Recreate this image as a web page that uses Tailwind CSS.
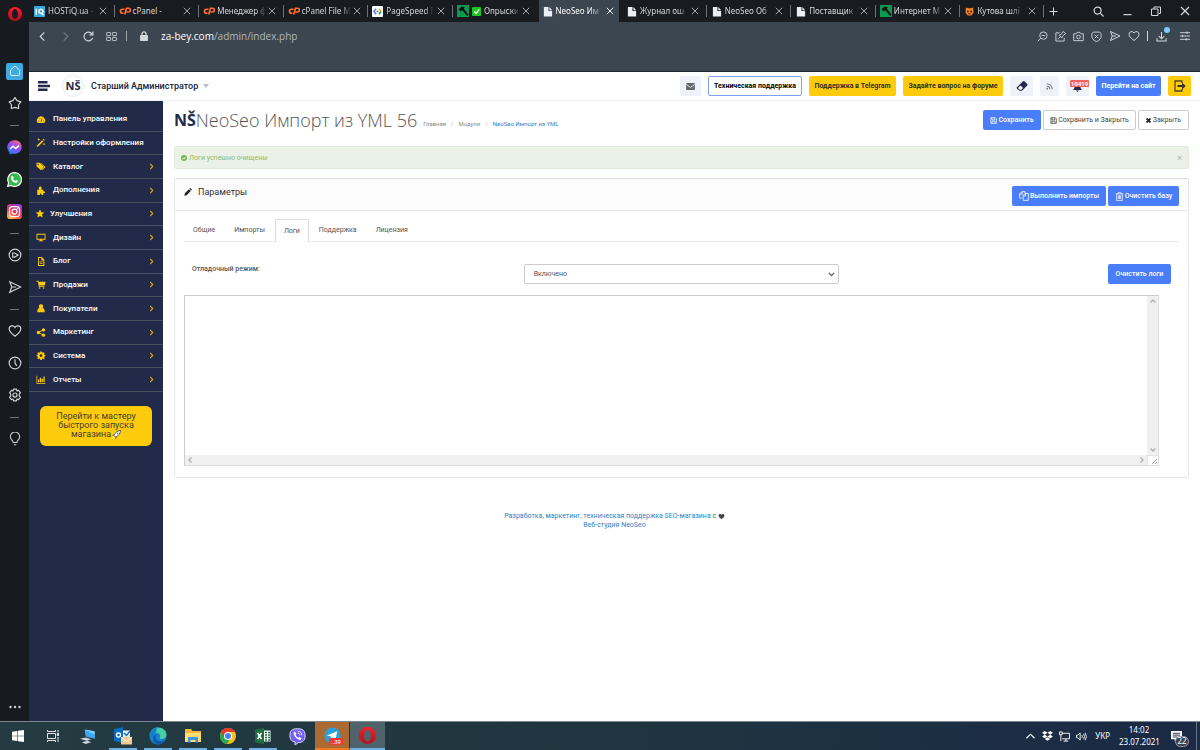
<!DOCTYPE html>
<html lang="ru">
<head>
<meta charset="utf-8">
<title>NeoSeo Импорт из YML</title>
<script src="https://cdn.jsdelivr.net/npm/@tailwindcss/browser@4"></script>
</head>
<body class="flex min-h-screen flex-col bg-white font-['Roboto',sans-serif] text-[7px] leading-[10px] text-[#666]">
<svg class="h-0 w-0" aria-hidden="true">
  <defs><linearGradient id="og" x1="0" y1="0" x2="0" y2="1"><stop offset="0" stop-color="#ff1b2d"/><stop offset="1" stop-color="#b0101c"/></linearGradient></defs>
  <symbol id="x" viewBox="0 0 10 10"><path d="M1 1l8 8M9 1l-8 8" stroke="currentColor" fill="none" stroke-width="1.2"/></symbol>
  <symbol id="cp" viewBox="0 0 24 16"><g fill="none" stroke="#ff6c2c" stroke-width="3.4"><path d="M11 4.500H7a4 4 0 0 0 0 8h2"/><path d="M11.500 15L15 2.500h4a3.400 3.400 0 0 1 0 7.500h-4"/></g></symbol>
  <symbol id="doc" viewBox="0 0 10 12"><path d="M0.500 1h5v4.500h4V11.500h-9z M6.500 1L9.500 4.500h-3z" fill="#eceff1"/></symbol>
  <symbol id="hammer" viewBox="0 0 12 12"><path d="M0 0h12v12H0z" fill="#0c9a50"/><path d="M1.500 4.500l3-3 3.500.8-1.200 1.500 4.700 6-1.300 1.300L5.300 5.300 3.800 6.500z" fill="#111"/></symbol>
  <symbol id="chev" viewBox="0 0 6 8"><path d="M1.500 1l3 3-3 3" fill="none" stroke="#d9a514" stroke-width="1.300"/></symbol>
  <symbol id="heart" viewBox="0 0 24 24"><path d="M12 21C5 15.500 2 12.500 2 8.500A5.300 5.300 0 0 1 12 6a5.300 5.300 0 0 1 10 2.500c0 4-3 7-10 12.500z"/></symbol>
  <symbol id="floppy" viewBox="0 0 16 16"><path d="M2 1.500h10l2.500 2.500v10.500H2zM4.500 2v4.500h6.500V2M4.500 14V9.500h7V14" fill="none" stroke="currentColor" stroke-width="1.700"/></symbol>
  <symbol id="opera" viewBox="0 0 24 24"><path fill="url(#og)" fill-rule="evenodd" d="M12 0a12 12 0 1 0 0 24a12 12 0 1 0 0-24zM12 3.500c3 0 5 3.800 5 8.500s-2 8.500-5 8.500-5-3.800-5-8.500 2-8.500 5-8.500z"/></symbol>
  <symbol id="send" viewBox="0 0 24 24"><path d="M3 3l19 9-19 9 3.500-9zM6.500 12H14"/></symbol>
</svg>

<div class="flex flex-1">
  <!-- Browser side panel -->
  <aside class="flex w-[29px] shrink-0 flex-col items-center bg-[#171b1f] text-[#cfd3d6]">
    <div class="flex h-[55px] items-start pt-[7px]"><svg class="size-[14px]"><use href="#opera"/></svg></div>
    <button aria-label="Главная" class="flex h-8 items-center"><span class="flex size-[17px] items-center justify-center rounded-xs bg-[#3fa9e1]"><svg class="size-3" viewBox="0 0 24 24" fill="none" stroke="#dff2fc" stroke-width="2"><path d="M3 10l9-8 9 8v9a2 2 0 0 1-2 2H5a2 2 0 0 1-2-2z"/></svg></span></button>
    <button aria-label="Закладки" class="flex h-8 items-center"><svg class="size-[14px]" viewBox="0 0 24 24" fill="none" stroke="currentColor" stroke-width="2" stroke-linejoin="round"><path d="M12 2.500l3.500 5.500 6.500 2-4 5 .3 6.500L12 19.500l-6.300 2L6 15l-4-5 6.500-2z"/></svg></button>
    <div class="flex h-3 items-center"><span class="h-px w-[9px] bg-[#6d7275]"></span></div>
    <button aria-label="Messenger" class="flex h-8 items-center"><svg class="size-[15px]" viewBox="0 0 24 24"><defs><linearGradient id="ms" x1="0.200" y1="1" x2="0.800" y2="0"><stop offset="0" stop-color="#1b8cff"/><stop offset=".5" stop-color="#8a4bff"/><stop offset="1" stop-color="#ff6a70"/></linearGradient></defs><path fill="url(#ms)" d="M12 .5C5.500.5.5 5.200.5 11.500c0 3.300 1.400 6 3.500 8V23.500l3.700-2c1.300.4 2.800.6 4.300.6 6.500 0 11.500-4.700 11.500-11S18.500.5 12 .5z"/><path fill="none" stroke="#fff" stroke-width="2.400" d="M5 14.500l4.500-4.500 4.500 3.500 5-4.500"/></svg></button>
    <button aria-label="WhatsApp" class="flex h-8 items-center"><svg class="size-[15px]" viewBox="0 0 24 24"><path d="M1 23l1.600-5.700A11 11 0 1 1 6.700 21.500z" fill="#35b84b" stroke="#f4f4f4" stroke-width="2"/><path fill="#fff" d="M8 6.500l1.700.2 1 2.800-1 1.300c.8 1.600 2 2.700 3.700 3.500l1.400-1.500 2.700 1.300c.2 2-1.500 3.400-3.300 3.300-4-.5-7.500-4-8-7.500 0-1.400.8-2.800 1.800-3.400z"/></svg></button>
    <button aria-label="Instagram" class="flex h-8 items-center"><svg class="size-[15px]" viewBox="0 0 24 24"><defs><linearGradient id="ig" x1="0.200" y1="1" x2="0.700" y2="0"><stop offset="0" stop-color="#ffc04a"/><stop offset=".45" stop-color="#f5324b"/><stop offset="1" stop-color="#8a3bd0"/></linearGradient></defs><rect width="24" height="24" rx="5" fill="url(#ig)"/><g fill="none" stroke="#fff" stroke-width="2"><rect x="4" y="4" width="16" height="16" rx="4.500"/><circle cx="12" cy="12" r="4"/></g><circle cx="16.800" cy="7.200" r="1.200" fill="#fff"/></svg></button>
    <div class="flex h-3 items-center"><span class="h-px w-[9px] bg-[#6d7275]"></span></div>
    <button aria-label="Плеер" class="flex h-8 items-center"><svg class="size-[14px]" viewBox="0 0 24 24" fill="none" stroke="currentColor" stroke-width="2"><circle cx="12" cy="12" r="10"/><path d="M8 8.500h3.500l6 3.500-6 3.500H8z"/></svg></button>
    <button aria-label="Поток" class="flex h-8 items-center"><svg class="size-[14px] fill-none stroke-current stroke-2"><use href="#send"/></svg></button>
    <div class="flex h-3 items-center"><span class="h-px w-[9px] bg-[#6d7275]"></span></div>
    <button aria-label="Избранное" class="flex h-8 items-center"><svg class="size-[14px] fill-none stroke-current stroke-2"><use href="#heart"/></svg></button>
    <button aria-label="История" class="flex h-8 items-center"><svg class="size-[14px]" viewBox="0 0 24 24" fill="none" stroke="currentColor" stroke-width="2"><circle cx="12" cy="12" r="10"/><path d="M12 5.500V12l3 5"/></svg></button>
    <button aria-label="Настройки" class="flex h-8 items-center"><svg class="size-[14px]" viewBox="0 0 24 24" fill="none" stroke="currentColor" stroke-width="2" stroke-linejoin="round"><path d="M9.500 2h5l.8 3 2.700-1 3.300 4-2 2.500v3l2 2.500-3.300 4-2.700-1-.8 3h-5l-.8-3-2.700 1-3.300-4 2-2.500v-3l-2-2.500L6 4l2.700 1z"/><circle cx="12" cy="12" r="3.500"/></svg></button>
    <div class="flex h-3 items-center"><span class="h-px w-[9px] bg-[#6d7275]"></span></div>
    <button aria-label="Советы" class="flex h-8 items-center"><svg class="size-[14px]" viewBox="0 0 24 24" fill="none" stroke="currentColor" stroke-width="1.800"><path d="M9 18c0-3-5-5-5-10a8 8 0 0 1 16 0c0 5-5 7-5 10zM10 22h4"/></svg></button>
    <button aria-label="Ещё" class="mt-auto flex h-7 items-center"><svg class="h-1 w-3" viewBox="0 0 12 4" fill="currentColor"><circle cx="1.500" cy="2" r="1.200"/><circle cx="6" cy="2" r="1.200"/><circle cx="10.500" cy="2" r="1.200"/></svg></button>
  </aside>

  <div class="flex min-w-0 flex-1 flex-col">
    <!-- Tabs -->
    <div class="flex h-[22px] bg-[#181b1f] font-['Noto_Sans',sans-serif] text-[8px] leading-3 text-[#d6d8da]">
      <div class="grid min-w-0 flex-1 grid-cols-12 items-center whitespace-nowrap">
        <div class="flex items-center gap-[3px] pl-[5px] pr-[7px]"><svg class="size-[11px] shrink-0" viewBox="0 0 12 12"><rect width="12" height="12" rx="1" fill="#35a9e0"/><path d="M2.500 3v6.500M7.500 3.500a2.300 2.300 0 1 0 .1 0M8.500 8l2 2" stroke="#fff" stroke-width="1.600" fill="none"/></svg><span class="flex-1 mask-r-from-80%">HOSTiQ.ua -</span><svg class="size-2 shrink-0 text-[#a8acaf]"><use href="#x"/></svg></div>
        <div class="flex items-center gap-[2px] border-l border-[#6d7276] pl-[4px] pr-[7px]"><svg class="h-2 w-3 shrink-0"><use href="#cp"/></svg><span class="flex-1">cPanel -</span><svg class="size-2 shrink-0 text-[#a8acaf]"><use href="#x"/></svg></div>
        <div class="flex items-center gap-[2px] border-l border-[#6d7276] pl-[4px] pr-[7px]"><svg class="h-2 w-3 shrink-0"><use href="#cp"/></svg><span class="flex-1 mask-r-from-80%">Менеджер ф</span><svg class="size-2 shrink-0 text-[#a8acaf]"><use href="#x"/></svg></div>
        <div class="flex items-center gap-[2px] border-l border-[#6d7276] pl-[4px] pr-[7px]"><svg class="h-2 w-3 shrink-0"><use href="#cp"/></svg><span class="flex-1 mask-r-from-80%">cPanel File M</span><svg class="size-2 shrink-0 text-[#a8acaf]"><use href="#x"/></svg></div>
        <div class="flex items-center gap-[3px] border-l border-[#6d7276] pl-[4px] pr-[7px]"><svg class="size-[11px] shrink-0" viewBox="0 0 12 12"><rect width="12" height="12" rx="1" fill="#fff"/><path d="M4.500 3L2 6l2.500 3" stroke="#4285f4" stroke-width="1.600" fill="none"/><path d="M7.500 3L10 6" stroke="#f4b400" stroke-width="1.600"/><path d="M10 6L7.500 9" stroke="#0f9d58" stroke-width="1.600"/><circle cx="6" cy="6" r="1" fill="#db4437"/></svg><span class="flex-1 mask-r-from-80%">PageSpeed I</span><svg class="size-2 shrink-0 text-[#a8acaf]"><use href="#x"/></svg></div>
        <div class="flex items-center gap-[3px] border-l border-[#6d7276] pl-[4px] pr-[7px]"><svg class="size-[12px] shrink-0"><use href="#hammer"/></svg><svg class="size-[9px] shrink-0" viewBox="0 0 10 10"><rect width="10" height="10" rx="1" fill="#18c61c"/><path d="M2.500 5l2 2.200 3.500-4.500" stroke="#fff" stroke-width="1.500" fill="none"/></svg><span class="flex-1 mask-r-from-80%">Опрыски</span><svg class="size-2 shrink-0 text-[#a8acaf]"><use href="#x"/></svg></div>
        <div class="mx-[2px] flex h-[22px] items-center gap-[3px] self-end bg-[#3b4651] pl-[4px] pr-[5px] text-white"><svg class="h-[11px] w-[10px] shrink-0"><use href="#doc"/></svg><span class="flex-1 mask-r-from-70%">NeoSeo Им</span><svg class="size-2 shrink-0"><use href="#x"/></svg></div>
        <div class="flex items-center gap-[3px] pl-[6px] pr-[7px]"><svg class="h-[11px] w-[10px] shrink-0"><use href="#doc"/></svg><span class="flex-1 mask-r-from-80%">Журнал ош</span><svg class="size-2 shrink-0 text-[#a8acaf]"><use href="#x"/></svg></div>
        <div class="flex items-center gap-[3px] border-l border-[#6d7276] pl-[5px] pr-[7px]"><svg class="h-[11px] w-[10px] shrink-0"><use href="#doc"/></svg><span class="flex-1 mask-r-from-80%">NeoSeo Об</span><svg class="size-2 shrink-0 text-[#a8acaf]"><use href="#x"/></svg></div>
        <div class="flex items-center gap-[3px] border-l border-[#6d7276] pl-[5px] pr-[7px]"><svg class="h-[11px] w-[10px] shrink-0"><use href="#doc"/></svg><span class="flex-1 mask-r-from-80%">Поставщик</span><svg class="size-2 shrink-0 text-[#a8acaf]"><use href="#x"/></svg></div>
        <div class="flex items-center gap-[2px] border-l border-[#6d7276] pl-[4px] pr-[7px]"><svg class="size-[12px] shrink-0"><use href="#hammer"/></svg><span class="flex-1 mask-r-from-80%">Интернет М</span><svg class="size-2 shrink-0 text-[#a8acaf]"><use href="#x"/></svg></div>
        <div class="flex items-center gap-[3px] border-x border-[#6d7276] pl-[5px] pr-[7px]"><svg class="size-[9px] shrink-0" viewBox="0 0 10 10"><path d="M1 .5l2.500 1h3L9 .5l.5 6L7 9.500H3L.5 6.500z" fill="#f58220"/><circle cx="3.200" cy="5" r="1" fill="#3c1f0c"/><circle cx="6.800" cy="5" r="1" fill="#3c1f0c"/><path d="M3.500 7.500h3" stroke="#3c1f0c"/></svg><span class="flex-1 mask-r-from-70%">Кутова шлі</span><svg class="size-2 shrink-0 text-[#a8acaf]"><use href="#x"/></svg></div>
      </div>
      <div class="flex w-[156px] items-center justify-between pl-[5px] pr-[10px] text-[#d6d8da]">
        <button aria-label="Новая вкладка"><svg class="size-[9px]" viewBox="0 0 10 10" stroke="currentColor" stroke-width="1.200"><path d="M5 0.500v9M0.500 5h9"/></svg></button>
        <div class="flex items-center gap-[19px]">
          <button aria-label="Поиск"><svg class="size-[11px]" viewBox="0 0 12 12" stroke="currentColor" fill="none" stroke-width="1.300"><circle cx="5" cy="5" r="3.800"/><path d="M8 8l3.500 3.500"/></svg></button>
          <button aria-label="Свернуть"><svg class="size-[9px]" viewBox="0 0 10 10"><path d="M.5 8.500h9" stroke="currentColor" stroke-width="1.300"/></svg></button>
          <button aria-label="Развернуть"><svg class="size-[10px]" viewBox="0 0 10 10" stroke="currentColor" fill="none"><path d="M3 3V1h6.500v6.500h-2M.5 3h6.500v6.500H.5z"/></svg></button>
          <button aria-label="Закрыть окно"><svg class="size-[10px]"><use href="#x"/></svg></button>
        </div>
      </div>
    </div>
    <!-- Address bar -->
    <div class="flex h-[50px] items-start justify-between border-b border-[#1f242a] bg-[#3b4651] px-[9px] pt-[8px] text-[#d3d7da]">
      <div class="flex h-3 items-center">
        <button aria-label="Назад"><svg class="size-[9px]" viewBox="0 0 10 10" fill="none" stroke="currentColor" stroke-width="1.300"><path d="M7 .5L2.500 5 7 9.500"/></svg></button>
        <button aria-label="Вперёд" class="ml-[14px] text-[#6f7982]"><svg class="size-[9px]" viewBox="0 0 10 10" fill="none" stroke="currentColor" stroke-width="1.300"><path d="M3 .5L7.500 5 3 9.500"/></svg></button>
        <button aria-label="Обновить" class="ml-[13px]"><svg class="size-[11px]" viewBox="0 0 12 12" fill="none" stroke="currentColor" stroke-width="1.300"><path d="M10.500 7.500A4.800 4.800 0 1 1 9.800 3.200M10.800 .5v3.700H7"/></svg></button>
        <button aria-label="Экспресс-панель" class="ml-3"><svg class="h-[9px] w-[11px]" viewBox="0 0 12 10" fill="none" stroke="currentColor"><rect x=".5" y=".5" width="4.500" height="3.500" rx=".8"/><rect x="7" y=".5" width="4.500" height="3.500" rx=".8"/><rect x=".5" y="6" width="4.500" height="3.500" rx=".8"/><rect x="7" y="6" width="4.500" height="3.500" rx=".8"/></svg></button>
        <span class="ml-[9px] h-[10px] w-px bg-[#9aa1a7]"></span>
        <svg class="ml-[13px] h-[10px] w-2" viewBox="0 0 8 10"><rect y="4" width="8" height="6" rx=".8" fill="currentColor"/><path d="M2 4V2.800a2 2 0 0 1 4 0V4" fill="none" stroke="currentColor" stroke-width="1.300"/></svg>
        <span class="ml-[13px] whitespace-nowrap font-['Open_Sans',sans-serif] text-[10px] leading-3 text-[#b0b7bd]"><span class="text-white">za-bey.com</span>/admin/index.php</span>
      </div>
      <div class="flex h-3 items-center gap-[7px] pr-px">
        <button aria-label="Масштаб"><svg class="size-[11px]" viewBox="0 0 12 12" fill="none" stroke="currentColor"><circle cx="7" cy="5" r="4"/><path d="M4 8L.8 11.200M5 5h4"/></svg></button>
        <button aria-label="Закрепить"><svg class="size-[11px]" viewBox="0 0 12 12" fill="none" stroke="currentColor"><path d="M5 2H1v9h9V7.500M3 9l3-3M4.500 4.500l3 3 .8-2L11.500 3 9 .5 6.500 3.700z"/></svg></button>
        <button aria-label="Снимок"><svg class="size-[11px]" viewBox="0 0 12 12" fill="none" stroke="currentColor"><path d="M.8 3h2.700l1-1.500h3l1 1.500h2.700v7.500H.8z"/><circle cx="6" cy="6.500" r="2"/></svg></button>
        <button aria-label="Блокировка рекламы"><svg class="size-[11px]" viewBox="0 0 12 12" fill="none" stroke="currentColor"><path d="M2.500 1.200h7L11 3v4L8.500 10.500 6 11.500 3.500 10.500 1 7V3zM4 4l4 4M8 4L4 8"/></svg></button>
        <button aria-label="Отправить"><svg class="size-[12px] fill-none stroke-current stroke-2"><use href="#send"/></svg></button>
        <button aria-label="В закладки"><svg class="size-[12px] fill-none stroke-current stroke-2"><use href="#heart"/></svg></button>
        <div class="h-[10px] w-px bg-[#d3d7da]"></div>
        <button aria-label="Загрузки" class="relative mr-[6px] ml-px"><svg class="size-[11px]" viewBox="0 0 12 12" fill="none" stroke="currentColor" stroke-width="1.100"><path d="M6 1v7M3 5.500l3 3 3-3M1 8v3h10V8"/></svg><span class="absolute -top-[4px] left-[8px] size-[6px] rounded-full bg-[#7fcdf7]"></span></button>
        <button aria-label="Простые настройки"><svg class="size-[10px]" viewBox="0 0 12 12" fill="none" stroke="currentColor" stroke-width="1.100"><path d="M0 2h12M0 6h12M0 10h12M8.500.5v3M3 4.500v3M7.500 8.500v3"/></svg></button>
      </div>
    </div>

    <!-- Admin header -->
    <header class="flex h-[29px] items-center justify-between border-b border-[#f0f0f0] bg-white px-[9px]">
      <div class="flex items-center">
        <button aria-label="Меню"><svg class="h-[10px] w-3" viewBox="0 0 12 10" stroke="#232a4b" stroke-width="2.600"><path d="M0 1.300h9.500M0 5h12M0 8.700h9.500"/></svg></button>
        <span class="ml-3 flex size-[22px] items-center justify-center rounded-full border border-[#e8eaf3] font-['Open_Sans',sans-serif] text-[11px] font-bold text-[#232a4b]">NŠ</span>
        <button class="ml-[7px] flex items-center gap-[5px] whitespace-nowrap text-[9px] font-medium text-[#151b3a]">Старший Администратор <svg class="h-1 w-[6px]" viewBox="0 0 6 4"><path d="M0 0h6L3 4z" fill="#b9bfce"/></svg></button>
      </div>
      <div class="flex items-center gap-[7px] whitespace-nowrap font-bold">
        <button aria-label="Почта" class="flex h-5 w-[21px] items-center justify-center rounded-xs bg-[#eff2f9]"><svg class="h-[7px] w-[9px]" viewBox="0 0 10 8"><rect width="10" height="8" rx="1" fill="#666"/><path d="M0 1.500l5 3.500 5-3.500" fill="none" stroke="#eff2f9"/></svg></button>
        <button class="h-5 w-[94px] rounded-xs border border-[#7ba0f8] text-black">Техническая поддержка</button>
        <button class="h-5 w-[87px] rounded-xs bg-[#fccb0c] text-[#30301c]">Поддержка в Telegram</button>
        <button class="h-5 w-[100px] rounded-xs bg-[#fccb0c] text-[#30301c]">Задайте вопрос на форуме</button>
        <button aria-label="Очистить кеш" class="flex h-5 w-[23px] items-center justify-center rounded-xs bg-[#eff2f9]"><svg class="size-3" viewBox="0 0 12 12"><path d="M.8 7.500L7 1.300a1 1 0 0 1 1.400 0l2.800 2.800a1 1 0 0 1 0 1.400L6 10.700H3.500L.8 8.500z" fill="#232a4b"/><path d="M2 8l2.500-2.500 2.500 2.500L5.200 9.800H3.800z" fill="#fff"/></svg></button>
        <button aria-label="RSS" class="flex h-5 w-[19px] items-center justify-center rounded-xs bg-[#eff2f9]"><svg class="size-[7px]" viewBox="0 0 10 10" fill="none" stroke="#777c8f" stroke-width="1.500"><path d="M1 1a8 8 0 0 1 8 8M1 4.500A4.500 4.500 0 0 1 5.500 9"/><circle cx="1.800" cy="8.200" r=".6"/></svg></button>
        <button aria-label="Уведомления" class="relative flex h-5 w-[23px] items-end justify-center rounded-xs bg-[#eff2f9] pb-[4px]"><svg class="h-[10px] w-[11px]" viewBox="0 0 10 10"><path d="M5 0a3 3 0 0 1 3 3v3l1.500 2h-9L2 6V3a3 3 0 0 1 3-3zM3.500 8.500h3L5 10z" fill="#232a4b"/></svg><span class="absolute top-1 left-1 h-[7px] rounded-[1px] bg-[#f4615f] px-px text-[6px] leading-[7px] text-white">10419</span></button>
        <button class="h-5 w-[65px] rounded-xs bg-[#497ef8] text-white">Перейти на сайт</button>
        <button aria-label="Выход" class="flex h-5 w-[23px] items-center justify-center rounded-xs bg-[#fccb0c]"><svg class="size-3" viewBox="0 0 12 12"><path d="M8 3V1H1v10h7V9" fill="none" stroke="#55481a" stroke-width="1.300"/><path d="M3.500 5H8V2.500L11.800 6 8 9.500V7H3.500z" fill="#3a3526"/></svg></button>
      </div>
    </header>

    <div class="flex flex-1">
      <!-- Admin menu -->
      <aside class="w-[134px] shrink-0 bg-[#222a49] pt-[7px] text-[8px] font-medium text-white">
        <nav class="grid h-[284px] auto-rows-fr grid-cols-1 whitespace-nowrap [&>a]:flex [&>a]:items-center [&>a]:border-b [&>a]:border-[#4b4f5c] [&>a]:pr-[9px] [&>a]:pl-[7px] [&>a>svg:first-child]:h-[9px] [&>a>svg:first-child]:w-[10px] [&>a>svg:first-child]:fill-[#fccb0c] [&>a>span]:ml-[7px] [&>a>span]:flex-1 [&>a>svg:last-child]:h-[7px] [&>a>svg:last-child]:w-[5px]">
          <a href="#"><svg viewBox="0 0 12 12"><path d="M1.500 10.500A5.500 5.500 0 1 1 10.500 10.500z"/><path d="M6 9l1.500-4M2.500 8h1M8.800 8h1M4 4l.5.800" stroke="#232a4b"/></svg><span>Панель управления</span></a>
          <a href="#"><svg viewBox="0 0 12 12"><path d="M0 10.500L7.500 3 9 4.500 1.500 12zM8.200 2.200L9.500 1 11 2.500 9.800 3.800zM3 0l.6 1.400L5 2l-1.400.6L3 4l-.6-1.400L1 2l1.400-.6zM10 6l.5 1.500 1.500.5-1.500.5L10 10l-.5-1.500L8 8l1.500-.5z"/></svg><span>Настройки оформления</span></a>
          <a href="#"><svg viewBox="0 0 12 12"><path d="M0 1h4.500L10 6.500 6 11 0 5.500zM6 1l6 5.500-4 4.500-.8-.8L10.500 6.500 5.500 1z"/><circle cx="2.200" cy="3.200" r=".9" fill="#232a4b"/></svg><span>Каталог</span><svg><use href="#chev"/></svg></a>
          <a href="#"><svg viewBox="0 0 12 12"><path d="M1 5h2.500C2.500 2 3.500.5 5 .5S7.500 2 6.500 5H9v2c3-1 3 3.500 0 2.500V12H6.500c.5-2.500-2.500-2.500-2 0H1z"/></svg><span>Дополнения</span><svg><use href="#chev"/></svg></a>
          <a href="#"><svg class="-ml-px mr-[-2px]" viewBox="0 0 12 12"><path d="M6 .5l1.700 3.700 4 .4-3 2.700.9 4L6 9.200l-3.600 2.100.9-4-3-2.700 4-.4z"/></svg><span>Улучшения</span><svg><use href="#chev"/></svg></a>
          <a href="#"><svg viewBox="0 0 12 12"><path fill-rule="evenodd" d="M0 1h12v8H7.500v1H9v1H3v-1h1.500V9H0zM1.200 2.200v5.600h9.600V2.200z"/></svg><span>Дизайн</span><svg><use href="#chev"/></svg></a>
          <a href="#"><svg viewBox="0 0 12 12"><path fill-rule="evenodd" d="M2 0h5l3.500 3.500V12H2zM3.200 1.200v9.600h6V4.500H6.500V1.200zM4.200 6h4v1h-4zM4.200 8h4v1h-4z"/></svg><span>Блог</span><svg><use href="#chev"/></svg></a>
          <a href="#"><svg viewBox="0 0 12 12"><path d="M0 1h2.500l.4 1.300H12l-1 5H4l.2.900h6.300v1H3.200L1.800 2.200H0z"/><circle cx="4.200" cy="10.700" r="1.100"/><circle cx="9.500" cy="10.700" r="1.100"/></svg><span>Продажи</span><svg><use href="#chev"/></svg></a>
          <a href="#"><svg viewBox="0 0 12 12"><path d="M6 .5a2.800 2.800 0 0 1 2 4.900c2 .3 3 2 3 5.600H1c0-3.600 1-5.300 3-5.600A2.800 2.800 0 0 1 6 .5z"/></svg><span>Покупатели</span><svg><use href="#chev"/></svg></a>
          <a href="#"><svg viewBox="0 0 12 12"><path d="M2.500 6L9 2.500M2.500 6L9 9.500" stroke="#fccb0c" stroke-width="1.300"/><circle cx="2.500" cy="6" r="2.200"/><circle cx="9.300" cy="2.500" r="2.200"/><circle cx="9.300" cy="9.500" r="2.200"/></svg><span>Маркетинг</span><svg><use href="#chev"/></svg></a>
          <a href="#"><svg viewBox="0 0 12 12"><path fill-rule="evenodd" d="M5 .5h2l.3 1.500 1 .4 1.300-.9 1.400 1.400-.9 1.300.4 1L12 5.500v1.500l-1.500.3-.4 1 .9 1.300-1.400 1.400-1.300-.9-1 .4L7 12H5l-.3-1.500-1-.4-1.300.9L1 9.600l.9-1.300-.4-1L0 7V5.500l1.500-.3.4-1L1 2.900l1.400-1.400 1.300.9 1-.4zM6 4.300a1.800 1.800 0 1 0 0 3.600 1.800 1.800 0 0 0 0-3.600z"/></svg><span>Система</span><svg><use href="#chev"/></svg></a>
          <a href="#"><svg viewBox="0 0 12 12"><path d="M0 1h1v9.500h11v1H0zM2 6h1.700v3.800H2zM4.400 3.500h1.700v6.300H4.400zM6.800 5h1.700v4.800H6.800zM9.200 2h1.700v7.800H9.200z"/></svg><span>Отчеты</span><svg><use href="#chev"/></svg></a>
        </nav>
        <button class="mx-auto mt-[14px] flex h-10 w-28 items-center justify-center rounded-md bg-[#fccb0c] text-center text-[9px] leading-[9px] font-normal text-[#46412e]"><span>Перейти к мастеру<br>быстрого запуска<br>магазина<svg class="inline size-[10px]" viewBox="0 0 12 12"><path d="M3.500 6.500C5 3 8 .8 11.500.5 11.200 4 9 7 5.500 8.500z" fill="#fff" stroke="#34495e"/><circle cx="8" cy="4" r="1.100" fill="#2196d8"/><path d="M3.500 5L1 6.500l2 .8zM7 8.500L5.500 11l-.8-2z" fill="#d0442e"/><path d="M3 7.500L.5 11.500 4.500 9z" fill="#f5efe0"/></svg></span></button>
      </aside>

      <main class="min-w-0 flex-1 px-[11px] pt-[9px]">
        <div class="flex items-start justify-between">
          <div class="flex h-5 items-center whitespace-nowrap">
            <span class="font-['Open_Sans',sans-serif] text-[16px] leading-5 font-bold text-[#232a4b]">NŠ</span>
            <h1 class="font-['Open_Sans',sans-serif] text-[18px] leading-5 font-light text-[#555]">NeoSeo Импорт из YML 56</h1>
            <nav class="mt-2 ml-[6px] flex gap-[5px] text-[6px] text-[#888]"><a href="#">Главная</a><span class="text-[#bbb]">/</span><a href="#">Модули</a><span class="text-[#bbb]">/</span><a href="#" class="text-[#2a84d0]">NeoSeo Импорт из YML</a></nav>
          </div>
          <div class="flex gap-[2px] whitespace-nowrap">
            <button class="flex h-5 w-[58px] items-center justify-center gap-px rounded-xs bg-[#497ef8] font-medium text-white"><svg class="size-[7px]"><use href="#floppy"/></svg>Сохранить</button>
            <button class="flex h-5 w-[93px] items-center justify-center gap-px rounded-xs border border-[#ccc] text-[#444]"><svg class="size-[7px]"><use href="#floppy"/></svg>Сохранить и Закрыть</button>
            <button class="flex h-5 w-[51px] items-center justify-center gap-[2px] rounded-xs border border-[#ccc] text-[#444]"><svg class="size-[5px]" viewBox="0 0 10 10"><path d="M1 1l8 8M9 1l-8 8" stroke="#222" stroke-width="3.500"/></svg>Закрыть</button>
          </div>
        </div>

        <div class="mt-4 flex h-[23px] items-center justify-between rounded-xs border border-[#e2ecdc] bg-[#eaf1e7] px-[6px] text-[#8fbb6c]">
          <span class="flex items-center gap-[2px]"><svg class="size-[6px]" viewBox="0 0 12 12"><circle cx="6" cy="6" r="6" fill="#7cb356"/><path d="M3 6l2.300 2.300L9 4.300" stroke="#fff" stroke-width="2" fill="none"/></svg>Логи успешно очищены</span>
          <button aria-label="Закрыть сообщение" class="text-[9px] font-bold text-[#bcc4b8]">×</button>
        </div>

        <section class="mt-[9px] rounded-xs border border-[#e8e8e8] border-t-[#dcdcdc]">
          <div class="flex h-8 justify-between border-b border-[#e8e8e8] bg-[#fcfcfc] px-[9px] pt-[7px]">
            <h2 class="flex h-3 items-center gap-[6px] text-[9px] text-[#333]"><svg class="size-[8px]" viewBox="0 0 12 12" fill="#222"><path d="M.5 11.500l.8-3.500L7.500 1.800l2.700 2.700L4 10.700zM8.200 1.100L9.300 0 12 2.700l-1.100 1.100z"/></svg>Параметры</h2>
            <div class="flex gap-[2px] whitespace-nowrap font-medium text-white">
              <button class="flex h-5 w-[94px] items-center justify-center gap-px rounded-xs bg-[#497ef8]"><svg class="size-[10px]" viewBox="0 0 12 12" fill="none" stroke="#fff"><path d="M3.500 8.500H.8V3.500L3.500.8h3.800V3M.8 3.800h3V1M5 5.500L7.200 3h4v8.200H5zM5 6h2.700V3"/></svg>Выполнить импорты</button>
              <button class="flex h-5 w-[71px] items-center justify-center gap-px rounded-xs bg-[#497ef8]"><svg class="size-[9px]" viewBox="0 0 12 12" fill="none" stroke="#fff"><path d="M1 2.500h10M4 2.500V1h4v1.500M2.200 2.500v9h7.600v-9M4.500 4.500v5M6 4.500v5M7.500 4.500v5"/></svg>Очистить базу</button>
            </div>
          </div>
          <div class="px-[9px] pt-[8px] pb-[11px]">
            <div role="tablist" class="flex gap-px border-b border-[#e8e8e8] whitespace-nowrap text-[#555]">
              <button role="tab" class="h-[22px] px-[9px]">Общие</button>
              <button role="tab" class="h-[22px] px-[9px]">Импорты</button>
              <button role="tab" aria-selected="true" class="-mb-px h-[23px] rounded-t-xs border border-b-0 border-[#ddd] bg-white px-[8px]">Логи</button>
              <button role="tab" class="h-[22px] px-[9px]">Поддержка</button>
              <button role="tab" class="h-[22px] px-[9px]">Лицензия</button>
            </div>
            <form class="pt-[22px]">
              <div class="grid grid-cols-3">
                <label for="debug" class="px-2 font-medium text-[#555]">Отладочный режим:</label>
                <div class="relative px-2">
                  <select id="debug" class="h-5 w-full appearance-none rounded-xs border border-[#ccc] bg-white px-[9px] text-[7px] text-[#555]"><option>Включено</option><option>Выключено</option></select>
                  <svg class="pointer-events-none absolute top-2 right-3 h-[5px] w-[7px]" viewBox="0 0 8 6" fill="none" stroke="#555" stroke-width="1.400"><path d="M.8 1L4 4.500 7.200 1"/></svg>
                </div>
                <div class="flex justify-end px-2"><button type="button" class="h-5 w-[63px] rounded-xs bg-[#497ef8] font-medium text-white">Очистить логи</button></div>
              </div>
              <div class="mt-[11px] mr-5 grid grid-cols-[1fr_11px] border border-[#ddd] border-t-[#ccc] border-l-[#ccc]">
                <textarea aria-label="Логи" class="h-[159px] w-full resize-none bg-white outline-none"></textarea>
                <div class="flex flex-col items-center justify-between bg-[#f0f0f0] py-[3px]">
                  <svg class="h-1 w-[6px]" viewBox="0 0 6 4" fill="none" stroke="#b0b0b0" stroke-width="1.400"><path d="M.5 3.500L3 1l2.500 2.500"/></svg>
                  <svg class="h-1 w-[6px]" viewBox="0 0 6 4" fill="none" stroke="#b0b0b0" stroke-width="1.400"><path d="M.5.500L3 3 5.500.500"/></svg>
                </div>
                <div class="flex h-[10px] items-center justify-between bg-[#f0f0f0] px-[3px]">
                  <svg class="h-[6px] w-1" viewBox="0 0 4 6" fill="none" stroke="#b0b0b0" stroke-width="1.400"><path d="M3.500.500L1 3l2.500 2.500"/></svg>
                  <svg class="h-[6px] w-1" viewBox="0 0 4 6" fill="none" stroke="#b0b0b0" stroke-width="1.400"><path d="M.5.500L3 3 .5 5.500"/></svg>
                </div>
                <div class="flex items-end justify-end border-t border-l border-[#e4e4e4] bg-white"><svg class="size-[7px]" viewBox="0 0 7 7" stroke="#777" stroke-dasharray="1 .4"><path d="M1 6L6 1M4 6l2-2"/></svg></div>
              </div>
            </form>
          </div>
        </section>

        <footer class="mt-[34px] pr-[134px] text-center leading-[9px] text-[#555]">
          <div class="pb-4"><a href="#" class="text-[#3183c8]">Разработка, маркетинг, техническая поддержка SEO-магазина</a> с <svg class="inline size-[7px] fill-[#444]"><use href="#heart"/></svg><br><a href="#" class="text-[#3183c8]">Веб-студия NeoSeo</a></div>
        </footer>
      </main>
    </div>
  </div>
</div>

<!-- System taskbar -->
<div class="flex h-[29px] justify-between border-t border-[#7b868d] bg-linear-to-r from-[#243b42] via-[#20353f] to-[#1a2945] text-white">
  <div class="flex [&>button]:flex [&>button]:w-[35px] [&>button]:items-center [&>button]:justify-center">
    <button aria-label="Пуск"><svg class="size-3" viewBox="0 0 12 12" fill="#fff"><path d="M0 1.700l5.300-.8v4.800H0zM5.900.8L12 0v5.700H5.900zM0 6.300h5.300v4.800L0 10.300zM5.900 6.300H12V12l-6.100-.8z"/></svg></button>
    <button aria-label="Просмотр задач"><svg class="size-3" viewBox="0 0 12 12" fill="none" stroke="#dfe4e6"><path d="M.5 0v1.500h8V0M.5 3.500h8v5h-8zM.5 12v-1.500h8V12M11 0v2.500M11 7v5"/><path d="M10.300 3.500h1.500v2h-1.500z" fill="#fff"/></svg></button>
    <button aria-label="Удалённый рабочий стол"><svg class="size-[17px]" viewBox="0 0 18 18"><path d="M6 1.500l10.500 2 .5 8L7 9z" fill="#3fa5f5"/><path d="M6 1.500l10.500 2 .3 4z" fill="#7cc7ff"/><path d="M1 11.500l6-1.500 6 2-5 1.500zM3 15l6-1.500 4 1.500-6 2z" fill="#cfd4d6"/></svg></button>
    <button aria-label="Outlook" class="bg-[linear-gradient(#6fb0e3,#6fb0e3)] bg-[length:28px_2px] bg-bottom bg-no-repeat"><svg class="size-[18px]" viewBox="0 0 18 18"><path d="M0 2l9-2v16l-9-2z" fill="#0a6cbd"/><circle cx="4.500" cy="8" r="2" fill="none" stroke="#fff" stroke-width="1.400"/><path d="M9 3.500h7v8H9z" fill="#e8f1f8"/><path d="M10 6l2.500 2.500L16 4" stroke="#0a6cbd" stroke-width="1.400" fill="none"/><path d="M7 10h11v7.500H7z" fill="#f2c98e"/><path d="M7 10l5.500 4.500L18 10" stroke="#fff" fill="none"/></svg></button>
    <button aria-label="Edge" class="bg-[linear-gradient(#6fb0e3,#6fb0e3)] bg-[length:28px_2px] bg-bottom bg-no-repeat"><svg class="size-[18px]" viewBox="0 0 18 18"><circle cx="9" cy="9" r="8.500" fill="#1b7fd6"/><path d="M.6 8C1.500 3 5 .5 9 .5c5 0 8.500 3.500 8.500 7 0 3-2.500 4.500-5 4.500-1.500 0-2.500-.8-1.800-1.800C12 8 10 6 7.500 6 4.500 6 1.500 7 .6 8z" fill="#45cfa0"/><path d="M.6 8C1.500 3 5 .5 9 .5c-2 1-1.500 3-1.500 4.500C5 6 4 9 5 12c1 2.500 3.500 4.500 6 5-5 1.500-10-2-10.400-9z" fill="#1580cf"/><path d="M7.500 7C6 8.500 5.800 11 8 13c2.500 2 5.500 1.500 8-.5-1.500 3-4 4.500-6.500 4.600C5 16.500 3.500 13 4.500 10 5 8.500 6 7.500 7.500 7z" fill="#0c59a4"/></svg></button>
    <button aria-label="Проводник" class="bg-[linear-gradient(#6fb0e3,#6fb0e3)] bg-[length:28px_2px] bg-bottom bg-no-repeat"><svg class="h-[14px] w-4" viewBox="0 0 16 14"><path d="M0 0h6l1.500 2H16v11H0z" fill="#f1b93e"/><path d="M0 4h16v9H0z" fill="#ffdc73"/><path d="M3 8h10v5.500h-2.500V11h-5v2.500H3z" fill="#3f97dd"/></svg></button>
    <button aria-label="Chrome" class="bg-[linear-gradient(#6fb0e3,#6fb0e3)] bg-[length:28px_2px] bg-bottom bg-no-repeat"><svg class="size-4" viewBox="0 0 16 16"><circle cx="8" cy="8" r="8" fill="#fbc116"/><path d="M8 8L1 4a8 8 0 0 0 6 12l4-6z" fill="#2da94f"/><path d="M8 4h7a8 8 0 0 0-14 0l3.500 6z" fill="#e33b2e"/><circle cx="8" cy="8" r="4" fill="#fff"/><circle cx="8" cy="8" r="3" fill="#4285f4"/></svg></button>
    <button aria-label="Excel" class="bg-[linear-gradient(#6fb0e3,#6fb0e3)] bg-[length:28px_2px] bg-bottom bg-no-repeat"><svg class="size-4" viewBox="0 0 16 16"><path d="M8 2.500h7.500v11H8z" fill="#fff"/><path d="M10 4.500h2M13 4.500h2M10 7h2M13 7h2M10 9.500h2M13 9.500h2M10 12h2M13 12h2" stroke="#1d6f42" stroke-width="1.400"/><path d="M0 1.800L9 0v16l-9-1.800z" fill="#1d6f42"/><path d="M2.500 5l4 6M6.500 5l-4 6" stroke="#fff" stroke-width="1.500"/></svg></button>
    <button aria-label="Viber"><svg class="size-[17px]" viewBox="0 0 18 18"><path d="M9 .8c6 0 8 2 8 7.200s-2 7.200-7 7.400L6.500 18v-3C2.500 14 1 12 1 8 1 2.800 3 .8 9 .8z" fill="#7360f2" stroke="#e8e4ff"/><path d="M5 4.500l1.300-.7 1.500 2.200-.8 1.200c.5 1.500 1.500 2.500 3 3l1.300-.8 2 1.500-.8 1.500c-2 .8-6.500-2-7.500-6-.2-.8-.2-1.400 0-1.900z" fill="#fff"/><path d="M9.300 3.500c2.700 0 4.200 1.700 4.200 4.200M9.300 5.500c1.300 0 2.200.8 2.200 2.200" fill="none" stroke="#fff" stroke-width=".9"/></svg></button>
    <button aria-label="Telegram" class="relative border-r border-b-2 border-[#f07a1c] border-r-[#20353f] bg-[#ab6a33]"><svg class="size-[17px]" viewBox="0 0 18 18"><circle cx="9" cy="9" r="8.500" fill="#2ba0da"/><path d="M3 9l11-4.500L12.300 13 9 10.800 7.500 12.500 7 9.800z" fill="#fff"/></svg><span class="absolute right-[6px] bottom-[3px] h-[7px] rounded-xs bg-[#ee3b35] px-[2px] text-[6px] leading-[7px]">..39</span></button>
    <button aria-label="Opera" class="border-b-2 border-[#6fb0e3] bg-[#50626a]"><svg class="size-[17px]"><use href="#opera"/></svg></button>
  </div>
  <div class="flex items-center font-['Noto_Sans',sans-serif] text-[8px]">
    <svg class="h-[6px] w-[9px]" viewBox="0 0 10 6" fill="none" stroke="#fff" stroke-width="1.200"><path d="M.5 5.500L5 1l4.500 4.500"/></svg>
    <svg class="ml-[7px] h-[10px] w-[11px]" viewBox="0 0 12 11" fill="#fff"><path d="M3 0l3 2-3 2-3-2zM9 0l3 2-3 2-3-2zM3 4l3 2-3 2-3-2zM9 4l3 2-3 2-3-2zM6 6.800l3 1.900-3 1.900-3-1.900z"/></svg>
    <svg class="ml-[6px] size-[11px]" viewBox="0 0 12 12" fill="none" stroke="#fff"><path d="M3.500 2.500h8v6h-8M7.500 8.500V11M5 11h5M.5 1h3v3h-3zM2 4v7"/></svg>
    <svg class="ml-[6px] h-[9px] w-[11px]" viewBox="0 0 12 10" fill="none" stroke="#fff"><path d="M.5 3.500H2L4.500 1v8L2 6.500H.5zM6.500 3.500q1 1.500 0 3M8.300 2q2 3 0 6M10 .800q3 4.200 0 8.400"/></svg>
    <span class="ml-2">УКР</span>
    <div class="ml-[9px] w-10 text-center leading-[12px] whitespace-nowrap"><div>14:02</div><div>23.07.2021</div></div>
    <button aria-label="Уведомления системы" class="relative mr-[14px] ml-3"><svg class="h-[11px] w-[11px]" viewBox="0 0 12 12"><path d="M0 0h12v9H6l-2 2.500V9H0z" fill="#fff"/><path d="M2 2.500h8M2 4.500h8M2 6.500h5" stroke="#1b2a44"/></svg><span class="absolute top-[5px] left-[4px] flex h-[11px] w-[14px] items-center justify-center rounded-full border border-[#9aa0a8] bg-[#3c4249]">22</span></button>
    <span class="h-full w-[4px] border-l border-[#6c7785]"></span>
  </div>
</div>
</body>
</html>
